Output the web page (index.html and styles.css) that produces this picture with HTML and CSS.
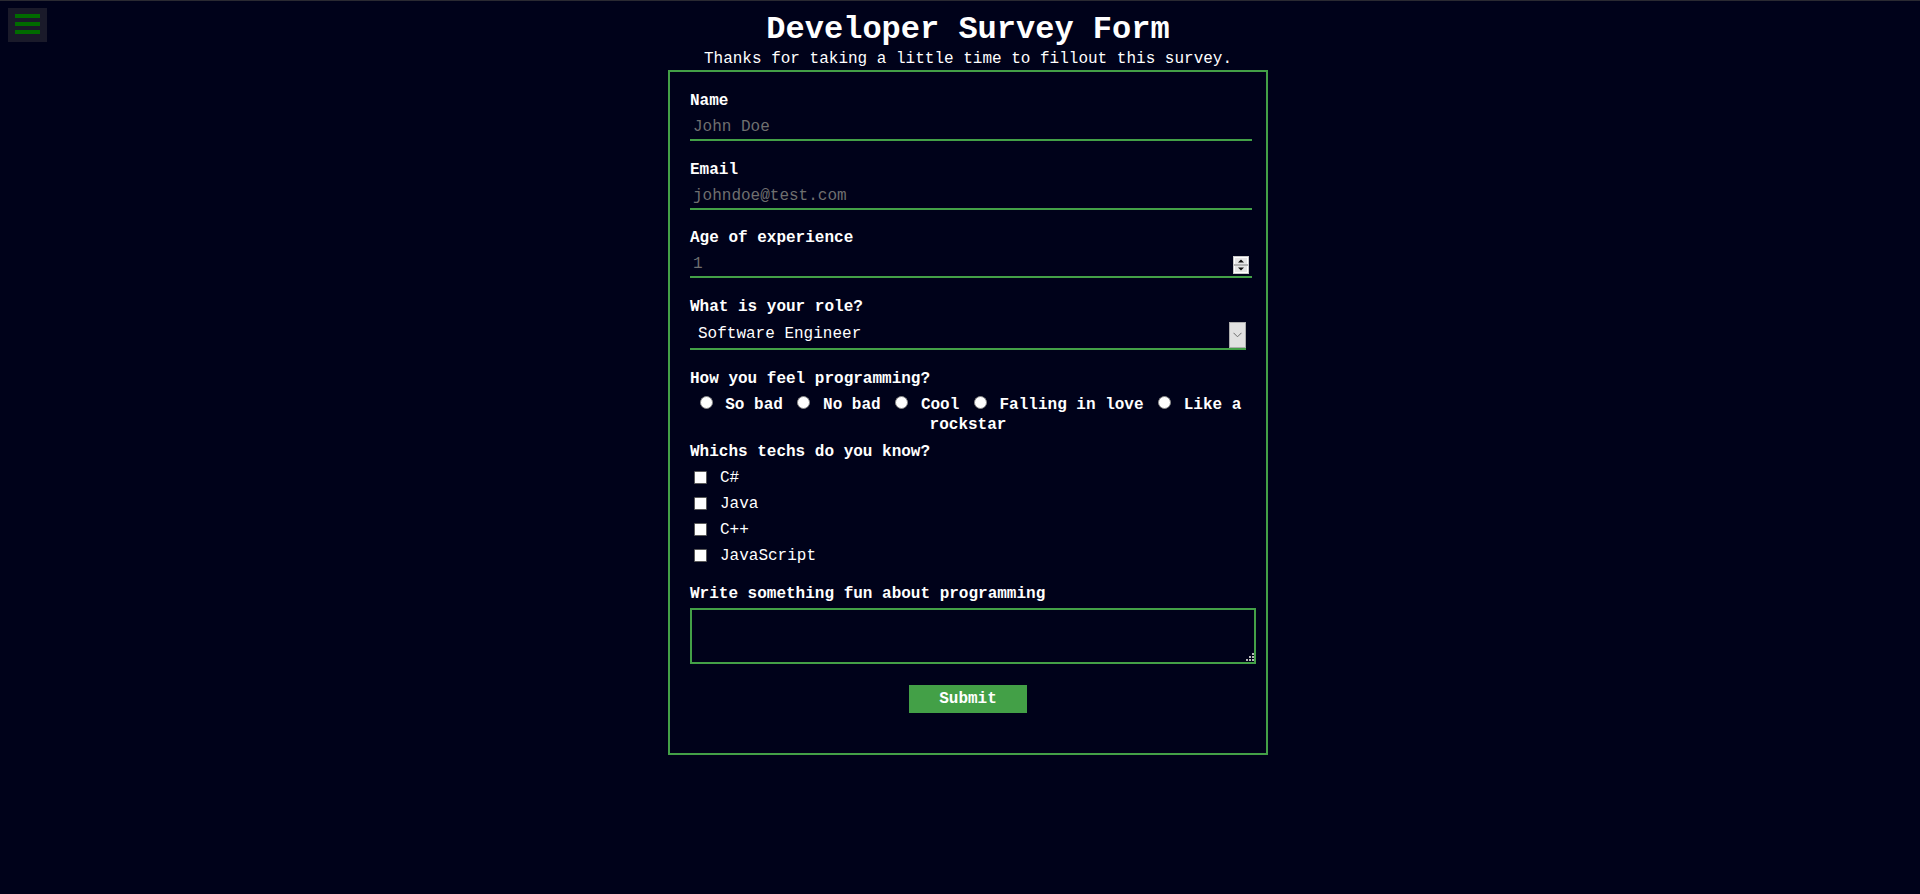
FILE: index.html
```html
<!DOCTYPE html>
<html lang="en">
<head>
<meta charset="utf-8">
<title>Developer Survey Form</title>
<link rel="stylesheet" href="styles.css">
</head>
<body>
<button class="menu-toggle" type="button" aria-label="Menu"><span class="bar"></span><span class="bar"></span><span class="bar"></span></button>
<main class="page">
  <h1 class="title" id="title">Developer Survey Form</h1>
  <p class="description" id="description">Thanks for taking a little time to fillout this survey.</p>
  <form class="survey" id="survey-form">
    <div class="field">
      <label class="label" for="name">Name</label>
      <input class="text-input" id="name" type="text" placeholder="John Doe">
    </div>
    <div class="field">
      <label class="label" for="email">Email</label>
      <input class="text-input" id="email" type="email" placeholder="johndoe@test.com">
    </div>
    <div class="field">
      <label class="label" for="number">Age of experience</label>
      <div class="number-wrap">
        <input class="text-input number-input" id="number" type="number" placeholder="1">
        <span class="spinner" aria-hidden="true"><svg width="16" height="18" viewBox="0 0 16 18"><rect x="0.5" y="0.5" width="15" height="17" fill="#ffffff" stroke="#c8c8c8"/><rect x="2" y="2" width="12" height="6" fill="#e6e6e6"/><rect x="2" y="10" width="12" height="6" fill="#e6e6e6"/><rect x="1" y="8" width="14" height="2" fill="#b4b4b4"/><path d="M5 6.5 L8 3.5 L11 6.5 Z" fill="#111"/><path d="M5 11.5 L8 14.5 L11 11.5 Z" fill="#111"/></svg></span>
      </div>
    </div>
    <div class="field">
      <label class="label" for="dropdown">What is your role?</label>
      <div class="select-wrap">
        <select class="select" id="dropdown">
          <option>Software Engineer</option>
          <option>Frontend Developer</option>
          <option>Backend Developer</option>
          <option>Student</option>
        </select>
        <span class="select-arrow" aria-hidden="true"><svg width="9" height="6" viewBox="0 0 9 6"><path d="M0.5 0.8 L4.5 4.8 L8.5 0.8" fill="none" stroke="#6e6e6e" stroke-width="1"/></svg></span>
      </div>
    </div>
    <div class="field field-radios">
      <p class="label">How you feel programming?</p>
      <div class="radios"><input class="radio" type="radio" name="feel" id="feel-1" value="1"> <label class="choice" for="feel-1">So bad</label> <input class="radio" type="radio" name="feel" id="feel-2" value="2"> <label class="choice" for="feel-2">No bad</label> <input class="radio" type="radio" name="feel" id="feel-3" value="3"> <label class="choice" for="feel-3">Cool</label> <input class="radio" type="radio" name="feel" id="feel-4" value="4"> <label class="choice" for="feel-4">Falling in love</label> <input class="radio" type="radio" name="feel" id="feel-5" value="5"> <label class="choice" for="feel-5">Like a rockstar</label></div>
    </div>
    <div class="field field-checks">
      <p class="label label-tight">Whichs techs do you know?</p>
      <label class="check-row"><input class="check" type="checkbox" value="csharp">C#</label>
      <label class="check-row"><input class="check" type="checkbox" value="java">Java</label>
      <label class="check-row"><input class="check" type="checkbox" value="cpp">C++</label>
      <label class="check-row"><input class="check" type="checkbox" value="js">JavaScript</label>
    </div>
    <div class="field field-text">
      <label class="label" for="fun">Write something fun about programming</label>
      <div class="textarea-wrap">
        <textarea class="textarea" id="fun"></textarea>
        <span class="grip" aria-hidden="true"><svg width="8" height="8" viewBox="0 0 8 8"><rect x="6" y="0" width="2" height="2" fill="#b8b8b8"/><rect x="3" y="3" width="2" height="2" fill="#b8b8b8"/><rect x="6" y="3" width="2" height="2" fill="#b8b8b8"/><rect x="0" y="6" width="2" height="2" fill="#b8b8b8"/><rect x="3" y="6" width="2" height="2" fill="#b8b8b8"/><rect x="6" y="6" width="2" height="2" fill="#b8b8b8"/></svg></span>
      </div>
    </div>
    <button class="submit" id="submit" type="submit">Submit</button>
  </form>
</main>
</body>
</html>
```
FILE: styles.css
```css
* {
  font-family: "Liberation Mono", "Courier New", monospace;
}

html {
  background: #00021a;
}

body {
  margin: 0;
  padding: 0 0 0 16px;
  min-height: 893px;
  background: #00021a;
  border-top: 1px solid #2a2a32;
  color: #ffffff;
}

.menu-toggle {
  position: fixed;
  top: 8px;
  left: 8px;
  width: 39px;
  height: 34px;
  padding: 6px 0 0 7px;
  margin: 0;
  border: none;
  background: #1a1a2a;
  display: flex;
  flex-direction: column;
  align-items: flex-start;
  gap: 4px;
  box-sizing: border-box;
}

.menu-toggle .bar {
  display: block;
  width: 25px;
  height: 4px;
  background: #006b00;
}

.page {
  display: flex;
  flex-direction: column;
  align-items: center;
}

.title {
  margin: 11px 0 0;
  font-size: 32px;
  line-height: 36px;
  font-weight: bold;
  text-align: center;
}

.description {
  margin: 2px 0 0;
  font-size: 16px;
  line-height: 18px;
  text-align: center;
}

.survey {
  width: 600px;
  box-sizing: border-box;
  margin: 2px 0 0;
  padding: 20px 20px 20px;
  border: 2px solid #43a047;
}

.field {
  margin-bottom: 19.5px;
}

.label {
  display: block;
  margin: 0 0 5px;
  font-size: 16px;
  line-height: 18px;
  font-weight: bold;
  color: #ffffff;
}

.label-tight {
  margin-bottom: 3.5px;
}

.text-input {
  display: block;
  width: 100%;
  margin: 0;
  padding: 3px;
  border: none;
  border-bottom: 2px solid #43a047;
  background: transparent;
  color: #ffffff;
  font-size: 16px;
  line-height: 18px;
  height: 18px;
  outline: none;
}

.text-input::placeholder {
  color: #6f6f6f;
}

.number-wrap {
  position: relative;
}

.number-input {
  -moz-appearance: textfield;
  appearance: textfield;
}

.number-input::-webkit-inner-spin-button,
.number-input::-webkit-outer-spin-button {
  -webkit-appearance: none;
  margin: 0;
}

.spinner {
  position: absolute;
  top: 4px;
  right: -3px;
  width: 16px;
  height: 18px;
  display: block;
  line-height: 0;
}

.select-wrap {
  position: relative;
}

.select {
  display: block;
  width: 100%;
  height: 29.5px;
  margin: 0;
  padding: 0 24px 0 8px;
  -webkit-appearance: none;
  appearance: none;
  border: none;
  border-radius: 0;
  border-bottom: 2px solid #43a047;
  background: transparent;
  color: #ffffff;
  font-size: 16px;
  outline: none;
}

.select option {
  background: #00021a;
  color: #ffffff;
}

.select-arrow {
  position: absolute;
  right: 0;
  top: 1.5px;
  width: 17px;
  height: 26px;
  box-sizing: border-box;
  background: #e1e1e1;
  border: 1px solid #adadad;
  display: flex;
  align-items: center;
  justify-content: center;
  pointer-events: none;
}

.field-radios {
  margin-bottom: 7px;
}

.radios {
  text-align: center;
  font-size: 16px;
  font-weight: bold;
  line-height: 20.8px;
}

.radio {
  -webkit-appearance: none;
  appearance: none;
  width: 13px;
  height: 13px;
  box-sizing: border-box;
  margin: 3px 3px 0 5px;
  border: 1px solid #8a8a8a;
  border-radius: 50%;
  background: #ffffff;
  vertical-align: baseline;
}

.choice {
  font-weight: bold;
}

.field-checks {
  margin-bottom: 16.5px;
}

.check-row {
  display: flex;
  align-items: center;
  height: 26px;
  font-size: 16px;
  line-height: 18px;
}

.check {
  -webkit-appearance: none;
  appearance: none;
  width: 13px;
  height: 13px;
  box-sizing: border-box;
  margin: -1px 13px 0 4px;
  border: 1px solid #5a5a5a;
  border-radius: 1px;
  background: #ffffff;
}

.field-text {
  margin-bottom: 0;
}

.textarea-wrap {
  position: relative;
  margin-top: 2px;
}

.textarea {
  display: block;
  width: 100%;
  height: 46px;
  margin: 0;
  padding: 3px;
  border: 2px solid #43a047;
  background: transparent;
  color: #ffffff;
  font-size: 16px;
  outline: none;
  resize: none;
}

.grip {
  position: absolute;
  right: -8px;
  bottom: 3px;
  width: 8px;
  height: 8px;
  line-height: 0;
  pointer-events: none;
}

.submit {
  display: block;
  margin: 21px auto 20px;
  padding: 5px 30px;
  border: none;
  border-radius: 0;
  background: #43a047;
  color: #ffffff;
  font-size: 16px;
  line-height: 18px;
  font-weight: bold;
}
```
